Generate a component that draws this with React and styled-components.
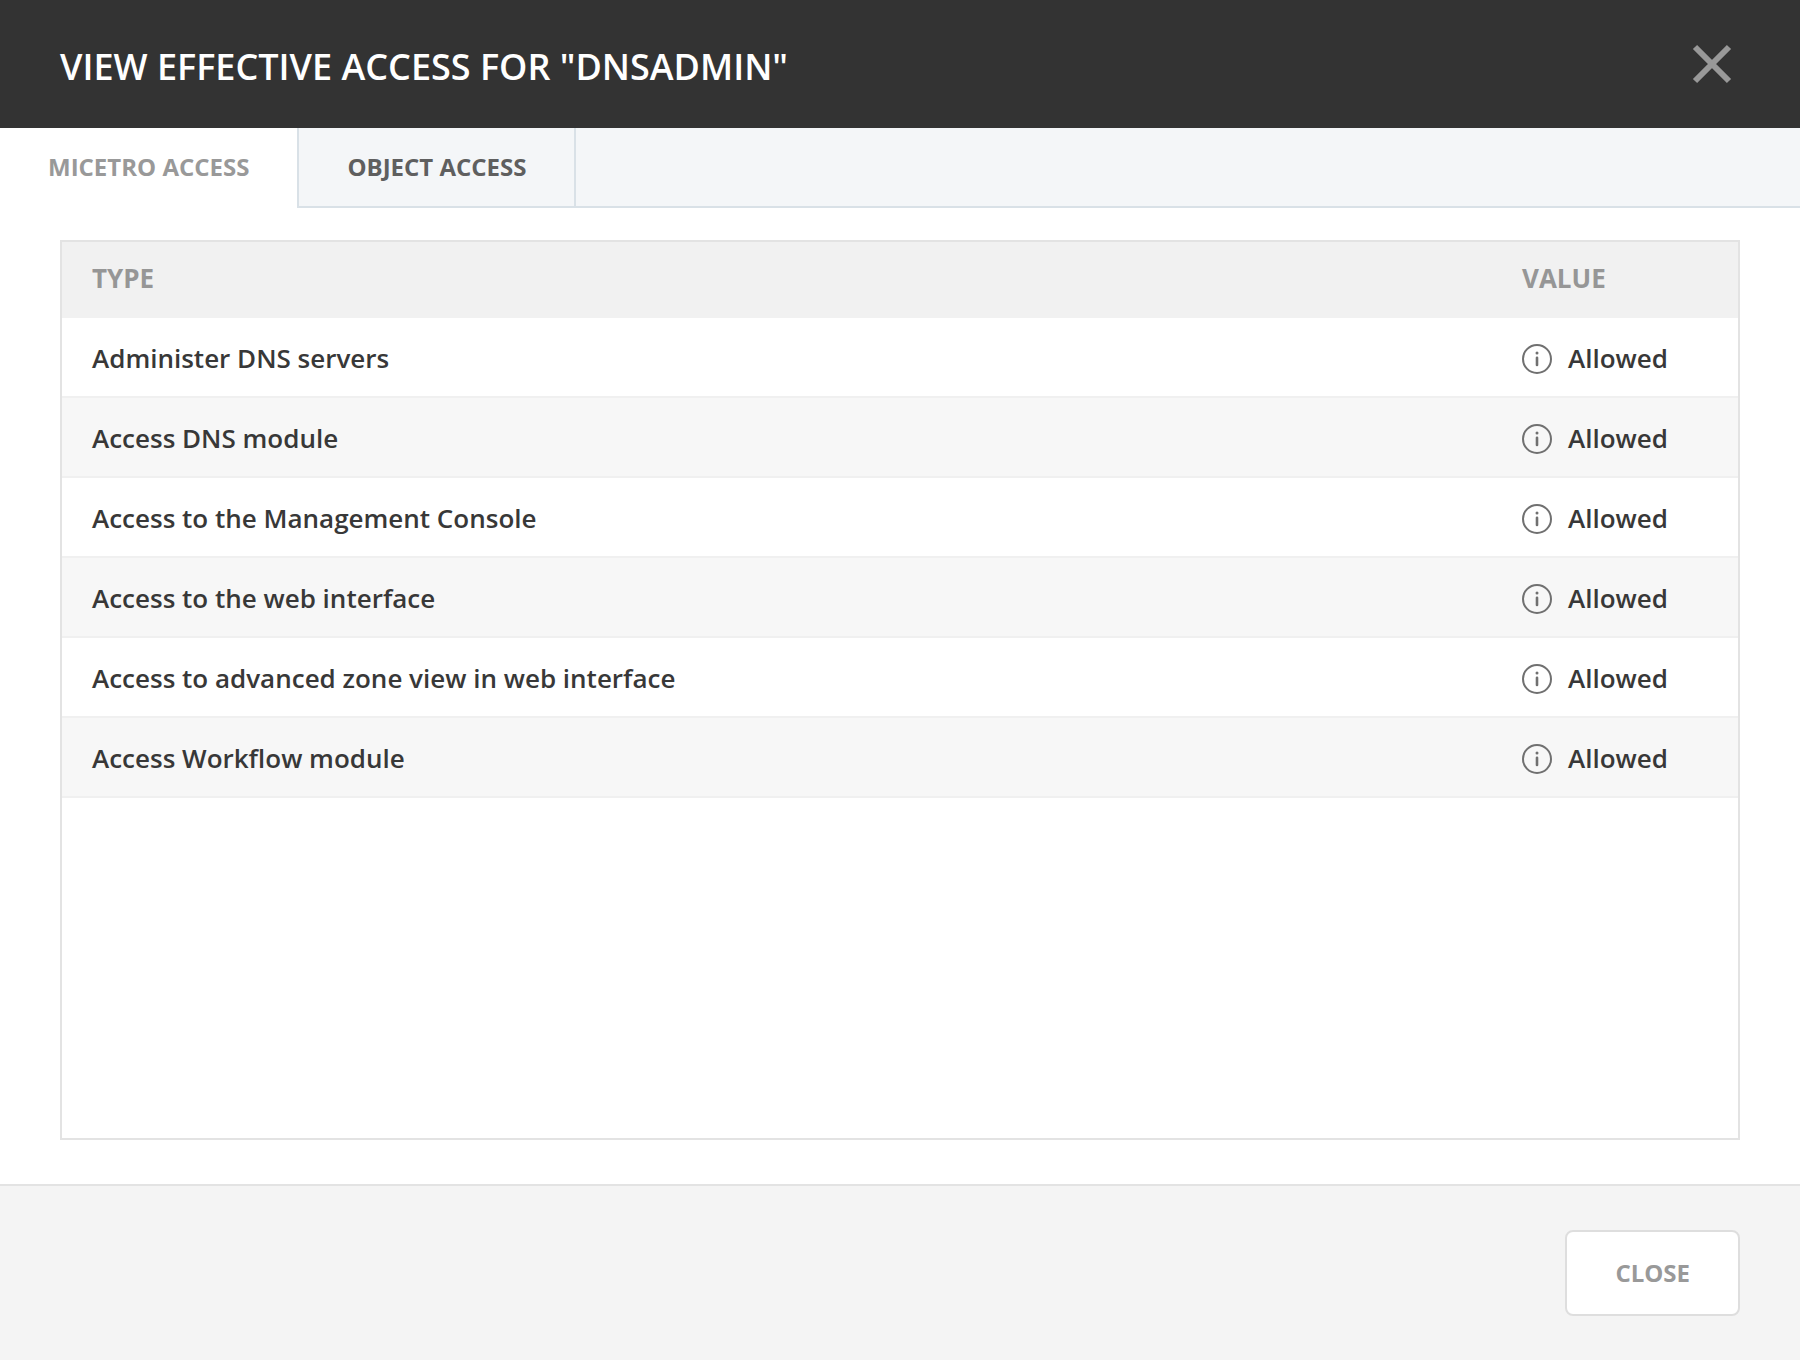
import React, { useState } from "react";
import styled, { createGlobalStyle } from "styled-components";

const GlobalStyle = createGlobalStyle`
  *, *::before, *::after { box-sizing: border-box; }
  body { margin: 0; background: #ffffff; }
  body, button { font-family: "Open Sans", "Noto Sans", sans-serif; }
`;

const Dialog = styled.div`
  display: flex;
  flex-direction: column;
  min-height: 100vh;
  color: #383838;
`;

const Header = styled.header`
  display: flex;
  align-items: center;
  justify-content: space-between;
  height: 128px;
  padding: 0 60px;
  background: #333333;
`;

const Title = styled.h1`
  margin: 0;
  padding-top: 6px;
  color: #ffffff;
  font-size: 36px;
  font-weight: 600;
  line-height: 52px;
  text-transform: uppercase;
`;

const IconButton = styled.button`
  display: flex;
  padding: 8px;
  border: 0;
  background: none;
  color: #999999;
  cursor: pointer;
`;

const TabBar = styled.div`
  display: flex;
  height: 80px;
`;

const Tab = styled.button`
  padding: 0 48px ${({ $active }) => ($active ? "4px" : "2px")};
  border: 0 solid #d9e1e7;
  border-bottom-width: ${({ $active }) => ($active ? "0" : "2px")};
  background: ${({ $active }) => ($active ? "#ffffff" : "#f4f6f8")};
  color: ${({ $active }) => ($active ? "#999999" : "#5f5f5f")};
  font-size: 24px;
  font-weight: 700;
  text-transform: uppercase;
  cursor: pointer;

  & + & {
    border-left-width: 2px;
  }
`;

const TabFill = styled.div`
  flex: 1;
  border: 0 solid #d9e1e7;
  border-left-width: 2px;
  border-bottom-width: 2px;
  background: #f4f6f8;
`;

const Panel = styled.main`
  display: flex;
  flex: 1;
  padding: 32px 60px 44px;
`;

const TableFrame = styled.div`
  flex: 1;
  border: 2px solid #e3e3e3;
`;

const Table = styled.table`
  width: 100%;
  border-collapse: separate;
  border-spacing: 0;
  table-layout: fixed;
  font-size: 26px;
  line-height: 36px;
  text-align: left;
`;

const HeadCell = styled.th`
  width: ${({ $width }) => $width || "auto"};
  height: 76px;
  padding: 0 30px 4px;
  background: #f1f1f1;
  color: #969696;
  font-weight: 700;
  text-transform: uppercase;
`;

const Row = styled.tr`
  background: #ffffff;

  &:nth-child(even) {
    background: #f7f7f7;
  }
`;

const Cell = styled.td`
  height: 80px;
  padding: 2px 30px 0;
  border-bottom: 2px solid #f0f0f0;
  font-weight: 600;
`;

const Value = styled.div`
  display: flex;
  align-items: center;
  gap: 16px;

  svg {
    margin-top: 2px;
  }
`;

const Footer = styled.footer`
  display: flex;
  justify-content: flex-end;
  padding: 44px 60px;
  border-top: 2px solid #e3e3e3;
  background: #f4f4f4;
`;

const CloseButton = styled.button`
  height: 86px;
  padding: 0 48px 2px;
  border: 2px solid #dedede;
  border-radius: 8px;
  background: #ffffff;
  color: #999999;
  font-size: 24px;
  font-weight: 700;
  text-transform: uppercase;
  cursor: pointer;
`;

const CrossIcon = () => (
  <svg width="40" height="40" viewBox="0 0 40 40" fill="none" stroke="currentColor" strokeWidth="6" aria-hidden="true">
    <path d="M3 3l34 34M37 3L3 37" />
  </svg>
);

const InfoIcon = () => (
  <svg width="30" height="30" viewBox="0 0 30 30" fill="none" stroke="#707070" aria-hidden="true">
    <circle cx="15" cy="15" r="14" strokeWidth="2" />
    <path d="M15 13.8v7.2" strokeWidth="2.6" strokeLinecap="round" />
    <circle cx="15" cy="8.9" r="1.5" fill="#707070" stroke="none" />
  </svg>
);

const tabs = [
  {
    name: "Micetro access",
    rows: [
      "Administer DNS servers",
      "Access DNS module",
      "Access to the Management Console",
      "Access to the web interface",
      "Access to advanced zone view in web interface",
      "Access Workflow module",
    ],
  },
  { name: "Object access", rows: [] },
];

export default function App() {
  const [active, setActive] = useState(0);

  return (
    <>
      <GlobalStyle />
      <Dialog role="dialog" aria-labelledby="dialog-title">
        <Header>
          <Title id="dialog-title">View effective access for "dnsadmin"</Title>
          <IconButton type="button" aria-label="Close">
            <CrossIcon />
          </IconButton>
        </Header>
        <TabBar role="tablist">
          {tabs.map((tab, index) => (
            <Tab
              key={tab.name}
              type="button"
              role="tab"
              aria-selected={index === active}
              $active={index === active}
              onClick={() => setActive(index)}
            >
              {tab.name}
            </Tab>
          ))}
          <TabFill role="presentation" />
        </TabBar>
        <Panel>
          <TableFrame>
            <Table>
              <thead>
                <tr>
                  <HeadCell scope="col">Type</HeadCell>
                  <HeadCell scope="col" $width="246px">Value</HeadCell>
                </tr>
              </thead>
              <tbody>
                {tabs[active].rows.map((row) => (
                  <Row key={row}>
                    <Cell>{row}</Cell>
                    <Cell>
                      <Value>
                        <InfoIcon />
                        Allowed
                      </Value>
                    </Cell>
                  </Row>
                ))}
              </tbody>
            </Table>
          </TableFrame>
        </Panel>
        <Footer>
          <CloseButton type="button">Close</CloseButton>
        </Footer>
      </Dialog>
    </>
  );
}
